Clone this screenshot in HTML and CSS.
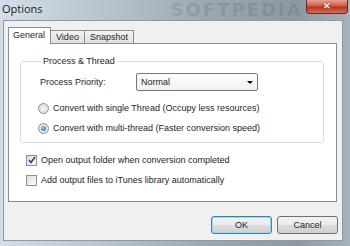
FILE: index.html
```html
<!DOCTYPE html>
<html lang="en">
<head>
  <meta charset="UTF-8">
  <title>Options</title>
  <link rel="stylesheet" href="styles.css">
</head>
<body>
  <div class="window">
    <div class="titlebar">
      <span class="title">Options</span>
      <span class="watermark">SOFTPEDIA</span>
      <button class="close" type="button">&#x2715;</button>
    </div>
    <div class="client">
      <div class="tabs">
        <div class="tab active">General</div>
        <div class="tab">Video</div>
        <div class="tab">Snapshot</div>
      </div>
      <div class="panel">
        <fieldset class="group">
          <legend>Process &amp; Thread</legend>
          <div class="priority">
            <span class="priority-label">Process Priority:</span>
            <div class="select">Normal<span class="arrow"></span></div>
          </div>
          <label class="option"><span class="radio"></span>Convert with single Thread (Occupy less resources)</label>
          <label class="option"><span class="radio checked"></span>Convert with multi-thread (Faster conversion speed)</label>
        </fieldset>
        <label class="check">
          <span class="box">
            <svg width="8" height="8" viewBox="0 0 8 8"><path d="M1 4 L3 6.5 L7 1" fill="none" stroke="#24439a" stroke-width="1.6"/></svg>
          </span>Open output folder when conversion completed
        </label>
        <label class="check"><span class="box"></span>Add output files to iTunes library automatically</label>
      </div>
      <div class="buttons">
        <button class="btn default" type="button">OK</button>
        <button class="btn" type="button">Cancel</button>
      </div>
    </div>
  </div>
</body>
</html>
```

FILE: styles.css
```css
body {
  margin: 0;
  font-family: "Liberation Sans", Arial, sans-serif;
  font-size: 9px;
  color: #1e1e1e;
}
.window {
  width: 350px;
  height: 246px;
  box-sizing: border-box;
  padding: 0 7px 5px 3px;
  background: linear-gradient(90deg, #d3dde7 0%, #b8c3ce 30%, #9aa6b2 60%, #8d98a4 85%, #a6b2be 100%);
  display: flex;
  flex-direction: column;
  overflow: hidden;
}
.titlebar {
  height: 20px;
  position: relative;
  display: flex;
  align-items: flex-start;
}
.title {
  font-family: "Open Sans", "Noto Sans", sans-serif;
  font-size: 11px;
  color: #0f1a24;
  padding-top: 1px;
  margin-left: -1px;
  text-shadow: 0 0 6px #e8eef4;
}
.watermark {
  font-family: "DejaVu Sans", sans-serif;
  font-weight: bold;
  font-size: 18px;
  letter-spacing: 2px;
  color: rgba(60, 70, 82, 0.16);
  margin-left: 128px;
  margin-top: -1px;
}
.close {
  position: absolute;
  top: 0;
  right: -5px;
  width: 42px;
  height: 14px;
  padding: 0;
  border: 1px solid #6b2a22;
  border-top: none;
  border-radius: 0 0 4px 4px;
  background: linear-gradient(#e6a395 0%, #cf5a45 45%, #b8321f 55%, #d2705a 100%);
  color: #fff;
  font-size: 9px;
  font-weight: bold;
  line-height: 13px;
  text-shadow: 0 0 2px #5a1b12;
}
.client {
  flex: 1;
  background: #f0f0f0;
  border: 1px solid #8c9aa8;
  padding: 6px 5px 0 4px;
  display: flex;
  flex-direction: column;
}
.tabs {
  display: flex;
  align-items: flex-end;
  height: 16px;
}
.tab {
  height: 12px;
  padding: 0 5px;
  border: 1px solid #898c95;
  border-bottom: none;
  border-left: none;
  background: linear-gradient(#f2f2f2, #e1e1e1);
  line-height: 12px;
}
.tab.active {
  height: 16px;
  line-height: 15px;
  padding: 0 5px 0 4px;
  background: #fff;
  border-left: 1px solid #898c95;
  margin-bottom: -1px;
  position: relative;
  z-index: 1;
}
.panel {
  height: 157px;
  background: #fff;
  border: 1px solid #898c95;
}
.group {
  margin: 12px 12px 0 11px;
  padding: 0 0 4px 17px;
  border: 1px solid #d5dfe5;
  border-radius: 3px;
}
.group legend {
  padding: 0 2px;
  margin-left: 3px;
  line-height: 11px;
}
.priority {
  display: flex;
  align-items: center;
  height: 18px;
  margin: 6px 0 0 2px;
}
.priority-label {
  width: 96px;
}
.select {
  width: 116px;
  height: 16px;
  border: 1px solid #7a7a7a;
  border-radius: 2px;
  padding-left: 4px;
  line-height: 16px;
  background: linear-gradient(#fdfdfd, #f1f1f1);
  position: relative;
}
.arrow {
  position: absolute;
  right: 4px;
  top: 7px;
  border-left: 3px solid transparent;
  border-right: 3px solid transparent;
  border-top: 3px solid #000;
}
.option {
  display: flex;
  align-items: center;
  height: 20px;
}
.option:first-of-type {
  margin-top: 7px;
}
.radio {
  width: 9px;
  height: 9px;
  border: 1px solid #8e8f8f;
  border-radius: 50%;
  background: radial-gradient(#f4f4f4, #d8d8d8);
  margin-right: 4px;
  position: relative;
}
.radio.checked::after {
  content: "";
  position: absolute;
  left: 2px;
  top: 2px;
  width: 5px;
  height: 5px;
  border-radius: 50%;
  background: radial-gradient(circle at 40% 35%, #8ad0f5, #1f5d9e);
}
.check {
  display: flex;
  align-items: center;
  height: 20px;
  margin-left: 17px;
}
.check:first-of-type {
  margin-top: 7px;
}
.box {
  width: 9px;
  height: 9px;
  border: 1px solid #8f8f8f;
  background: linear-gradient(135deg, #dcdcdc, #fbfbfb);
  margin-right: 4px;
  display: flex;
  align-items: center;
  justify-content: center;
}
.buttons {
  display: flex;
  justify-content: flex-end;
  gap: 5px;
  margin-top: 14px;
  margin-right: -1px;
}
.btn {
  width: 61px;
  height: 18px;
  padding: 0;
  border: 1px solid #707070;
  border-radius: 3px;
  background: linear-gradient(#f2f2f2 0%, #ebebeb 50%, #dddddd 51%, #cfcfcf 100%);
  font-family: "Liberation Sans", Arial, sans-serif;
  font-size: 9px;
  color: #1e1e1e;
}
.btn.default {
  border-color: #3c7fb1;
  box-shadow: inset 0 0 0 1px #9fd5f3;
}
```
